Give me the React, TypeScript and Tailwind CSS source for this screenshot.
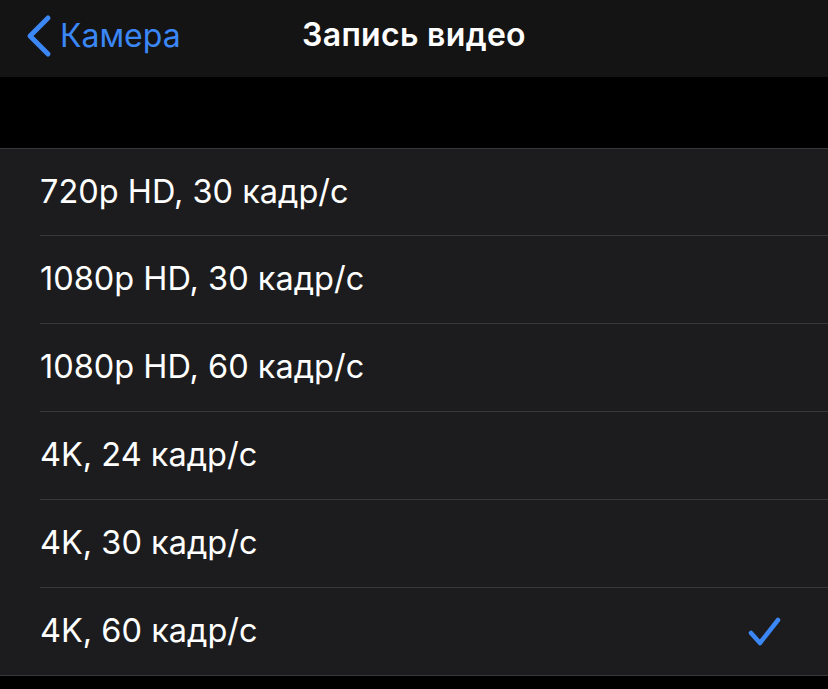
const options = [
  '720p HD, 30 кадр/с',
  '1080p HD, 30 кадр/с',
  '1080p HD, 60 кадр/с',
  '4K, 24 кадр/с',
  '4K, 30 кадр/с',
  '4K, 60 кадр/с',
]

const selected = 5

export default function App() {
  return (
    <div
      className="min-h-screen w-[828px] h-[689px] overflow-hidden bg-black text-white"
      style={{ fontFamily: 'Inter, "Noto Sans", sans-serif' }}
    >
      {/* Nav bar */}
      <header className="relative h-[77px] bg-[#141414] flex items-center pb-[6px]">
        <button className="flex items-center gap-[8px] pl-[26px] text-[#3b87f6]">
          <svg width="26" height="44" viewBox="0 0 26 44" fill="none">
            <path d="M22 4 L4 22 L22 40" stroke="currentColor" strokeWidth="5" strokeLinecap="round" strokeLinejoin="round" />
          </svg>
          <span className="text-[32px] leading-none">Камера</span>
        </button>
        <h1 className="absolute left-0 right-0 top-[19px] text-center text-[32px] font-semibold leading-none tracking-[0.3px] pointer-events-none">
          Запись видео
        </h1>
      </header>

      {/* Gap */}
      <div className="h-[71px]" />

      {/* List */}
      <ul className="bg-[#1c1c1e] border-y border-[#38383a]">
        {options.map((label, i) => (
          <li key={label} className="pl-[40px]">
            <div
              className={`flex items-center justify-between pr-[46px] ${
                i < options.length - 1 ? 'border-b border-[#38383a]' : ''
              } ${i === 0 ? 'h-[87px]' : i < options.length - 1 ? 'h-[88px]' : 'h-[87px]'}`}
            >
              <span className="text-[32.5px] leading-none text-white">{label}</span>
              {i === selected && (
                <svg width="34" height="32" viewBox="0 0 34 32" fill="none" className="text-[#3b87f6]">
                  <path d="M3 17 L12 27 L30 4" stroke="currentColor" strokeWidth="4.5" strokeLinecap="round" strokeLinejoin="round" />
                </svg>
              )}
            </div>
          </li>
        ))}
      </ul>
    </div>
  )
}
